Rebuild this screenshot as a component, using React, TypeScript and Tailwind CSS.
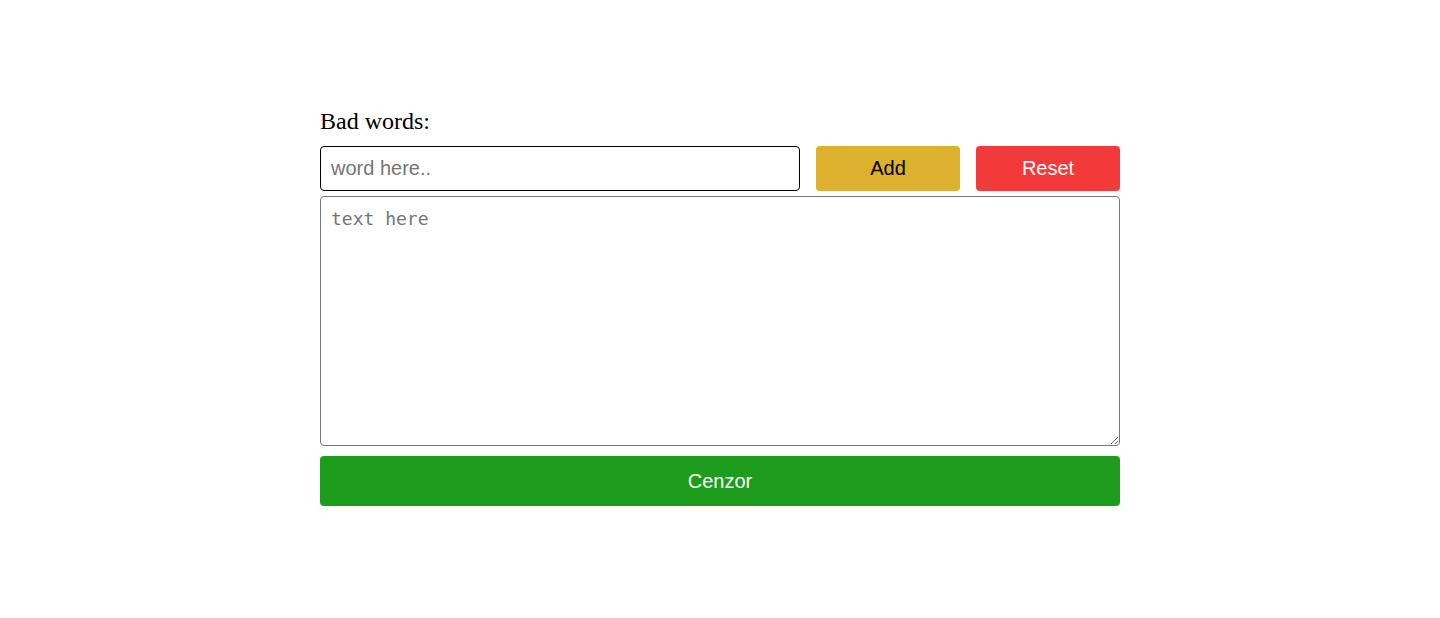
export default function App() {
  return (
    <div className="min-h-[618px] bg-white">
      <div className="mx-auto w-[800px] pt-[107px]">
        <label className="block font-['Liberation_Serif',serif] text-[24px] leading-[28px] text-black">Bad words:</label>
        <div className="mt-[11px] flex gap-4">
          <input
            type="text"
            placeholder="word here.."
            className="h-[45px] w-[480px] rounded-[4px] border border-black px-[10px] font-['Liberation_Sans',Arial,sans-serif] text-[20px] text-black placeholder:text-[#757575] focus:outline-none"
          />
          <button className="h-[45px] w-[144px] rounded-[4px] bg-[#ddb02e] pb-[2px] font-['Liberation_Sans',Arial,sans-serif] text-[20px] text-black">
            Add
          </button>
          <button className="h-[45px] w-[144px] rounded-[4px] bg-[#f23a3a] pb-[2px] font-['Liberation_Sans',Arial,sans-serif] text-[20px] text-white">
            Reset
          </button>
        </div>
        <textarea
          placeholder="text here"
          className="mt-[5px] block h-[250px] w-full rounded-[4px] border border-[#767676] px-[10px] pt-[8px] pb-[10px] font-['DejaVu_Sans_Mono',monospace] text-[18px] text-black placeholder:text-[#757575] focus:outline-none"
        />
        <button className="mt-[10px] h-[50px] w-full rounded-[4px] bg-[#1e9c1e] font-['Liberation_Sans',Arial,sans-serif] text-[20px] text-white">
          Cenzor
        </button>
      </div>
    </div>
  )
}
